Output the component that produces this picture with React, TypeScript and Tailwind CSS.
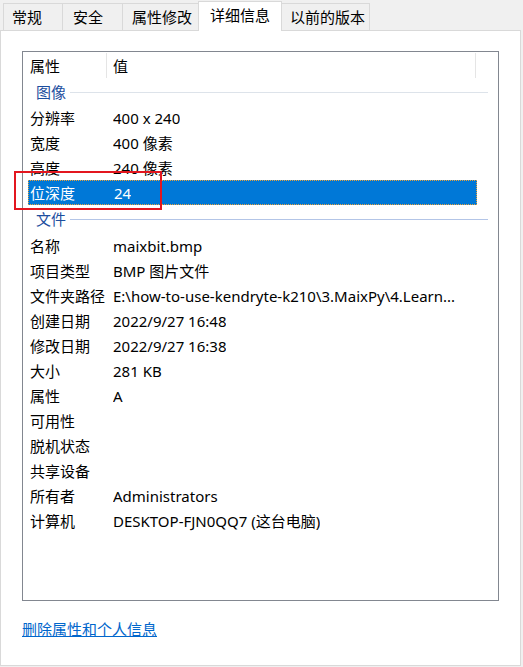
import React from "react";

const font = { fontFamily: '"Noto Sans", "Noto Sans CJK SC", sans-serif' };

type Row = { k: string; v: string; sel?: boolean };

const image: Row[] = [
  { k: "分辨率", v: "400 x 240" },
  { k: "宽度", v: "400 像素" },
  { k: "高度", v: "240 像素" },
  { k: "位深度", v: "24", sel: true },
];

const file: Row[] = [
  { k: "名称", v: "maixbit.bmp" },
  { k: "项目类型", v: "BMP 图片文件" },
  { k: "文件夹路径", v: "E:\\how-to-use-kendryte-k210\\3.MaixPy\\4.Learn..." },
  { k: "创建日期", v: "2022/9/27 16:48" },
  { k: "修改日期", v: "2022/9/27 16:38" },
  { k: "大小", v: "281 KB" },
  { k: "属性", v: "A" },
  { k: "可用性", v: "" },
  { k: "脱机状态", v: "" },
  { k: "共享设备", v: "" },
  { k: "所有者", v: "Administrators" },
  { k: "计算机", v: "DESKTOP-FJN0QQ7 (这台电脑)" },
];

function DataRow({ r }: { r: Row }) {
  return (
    <div
      className={
        "ml-[5px] w-[449px] h-[25px] flex items-center whitespace-nowrap leading-[21px] pt-[1px] " +
        (r.sel
          ? "bg-[#0078d7] text-white border border-dotted border-[#e9a23b]"
          : "text-black")
      }
    >
      <div className={"w-[85px] shrink-0 " + (r.sel ? "pl-[1px]" : "pl-[2px]")}>{r.k}</div>
      <div className="max-w-[362px] truncate">{r.v}</div>
    </div>
  );
}

function Group({ label, h, line }: { label: string; h: string; line: string }) {
  return (
    <div className={"flex items-center pl-[13px] pr-[10px] " + h}>
      <span className="text-[#1c4e9e] leading-[21px]">{label}</span>
      <div className={"flex-1 h-px ml-[4px] mt-[1px] " + line} />
    </div>
  );
}

export default function App() {
  return (
    <div
      className="relative w-[523px] h-[667px] bg-[#f0f0f0] flex flex-col text-[15px] leading-[21px]"
      style={font}
    >
      {/* tabs */}
      <div className="h-[30px] flex items-end pl-[3px] text-black">
        <div className="w-[60px] h-[27px] border-l border-t border-r border-[#d9d9d9] flex items-center pl-[8px]">常规</div>
        <div className="w-[60px] h-[27px] border-t border-r border-[#d9d9d9] flex items-center pl-[10px]">安全</div>
        <div className="w-[75px] h-[27px] border-t border-[#d9d9d9] flex items-center pl-[9px]">属性修改</div>
        <div className="relative z-10 w-[84px] h-[30px] -mb-px bg-white border-l border-t border-r border-[#d9d9d9] flex items-center pl-[11px] pb-[2px]">详细信息</div>
        <div className="w-[88px] h-[27px] border-t border-r border-[#d9d9d9] flex items-center pl-[8px]">以前的版本</div>
      </div>
      {/* panel */}
      <div className="w-[521px] h-[636px] bg-white border border-[#d9d9d9] flex flex-col pl-[21px] pt-[20px]">
        <div className="w-[477px] h-[550px] border border-[#828790] flex flex-col">
          <div className="h-[27px] flex items-stretch text-black">
            <div className="w-[83px] flex items-center pl-[7px] pt-[1px]">属性</div>
            <div className="w-px bg-[#e5e5e5] my-[1px]" />
            <div className="w-[368px] flex items-center pl-[6px] pt-[1px]">值</div>
            <div className="w-px bg-[#e5e5e5] my-[1px]" />
          </div>
          <Group label="图像" h="h-[26px]" line="bg-[#dde3ea]" />
          {image.map((r) => (
            <DataRow key={r.k} r={r} />
          ))}
          <Group label="文件" h="h-[28px]" line="bg-[#b3c5e7]" />
          {file.map((r) => (
            <DataRow key={r.k} r={r} />
          ))}
        </div>
        <div className="mt-[20px] h-[16px] flex items-center">
          <span className="text-[#0066cc] underline">删除属性和个人信息</span>
        </div>
      </div>
      {/* annotation */}
      <div className="absolute left-[14px] top-[171px] w-[148px] h-[39px] border-2 border-[#e3161f]" />
    </div>
  );
}
